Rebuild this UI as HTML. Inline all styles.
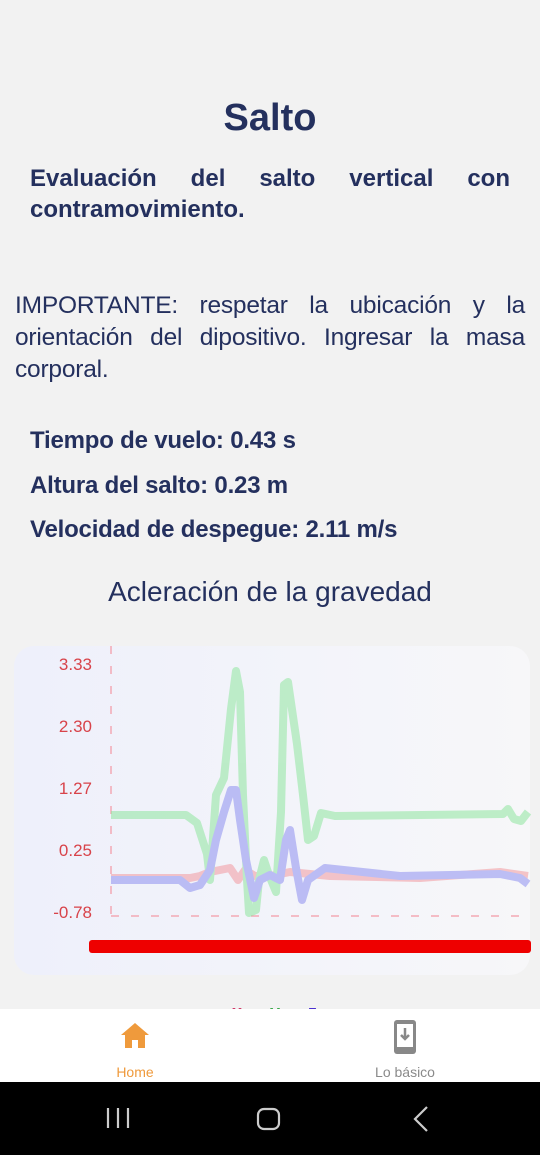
<!DOCTYPE html>
<html><head><meta charset="utf-8"><style>
body{margin:0;width:540px;height:1155px;background:#f2f2f2;position:relative;overflow:hidden;font-family:"Liberation Sans",Roboto,sans-serif;color:#24305e}
.a{position:absolute}
h1{position:absolute;top:97px;left:0;width:540px;text-align:center;margin:0;font-size:38px;font-weight:bold;color:#24305e}
.sub{left:30px;width:480px;top:163px;font-size:24px;font-weight:bold;line-height:31px;text-align:justify;text-align-last:left}
.imp{left:15px;width:510px;top:290px;font-size:24.5px;line-height:32px;text-align:justify;color:#24305e;letter-spacing:-0.2px}
.st{left:30px;font-size:24px;font-weight:bold;letter-spacing:-0.2px}
</style></head><body>
<h1>Salto</h1>
<div class="a sub">Evaluación del salto vertical con contramovimiento.</div>
<div class="a imp">IMPORTANTE: respetar la ubicación y la orientación del dipositivo. Ingresar la masa corporal.</div>
<div class="a st" style="top:427px">Tiempo de vuelo: 0.43 s</div>
<div class="a st" style="top:472px">Altura del salto: 0.23 m</div>
<div class="a st" style="top:516px">Velocidad de despegue: 2.11 m/s</div>
<div class="a" style="top:576px;left:0;width:540px;text-align:center;font-size:28px">Acleración de la gravedad</div>
<div class="a" style="left:14px;top:646px;width:516px;height:329px;border-radius:20px;background:linear-gradient(90deg,#eef0fb,#f7f7f9)"></div>
<svg class="a" style="left:0;top:0" width="540" height="1010">
<g font-size="17" fill="#d8434a" text-anchor="end" font-family="Liberation Sans,sans-serif">
<text x="92" y="670">3.33</text><text x="92" y="732">2.30</text><text x="92" y="794">1.27</text><text x="92" y="856">0.25</text><text x="92" y="918">-0.78</text></g>
<line x1="111" y1="646" x2="111" y2="915" stroke="#f3a9b4" stroke-width="1.5" stroke-dasharray="8,12"/>
<line x1="111" y1="916" x2="528" y2="916" stroke="#f3a9b4" stroke-width="1.5" stroke-dasharray="8,12"/>
<g fill="none" stroke-width="8" stroke-linejoin="round" opacity="0.55">
<polyline stroke="#f29aa0" points="111,878 190,878 200,876 210,872 220,870 230,868 238,880 245,870 255,876 270,876 290,872 330,876 420,878 500,872 528,876"/>
<polyline stroke="#8fe69f" points="111,815 186,815 197,823 207,854 210,880 216,795 224,778 231,709 236,671 240,692 243,795 247,880 249,913 256,910 259,880 264,860 269,875 276,892 281,812 284,685 288,682 297,744 303,795 308,840 314,836 321,813 335,816 503,814 508,809 514,819 521,821 528,812"/>
<polyline stroke="#8e90f0" points="111,880 180,880 190,888 200,885 210,870 216,840 224,812 231,790 236,790 240,820 246,860 254,898 260,880 270,875 280,880 286,840 290,830 296,868 302,900 308,880 325,868 400,876 500,874 520,878 528,884"/>
</g>
<rect x="89" y="940" width="442" height="13" rx="3" fill="#ee0000"/>
<g font-size="18" font-weight="bold" font-family="Liberation Sans,sans-serif"><text x="232" y="1018" fill="#d03a6a">x</text><text x="270" y="1018" fill="#3aa84a">y</text><text x="308" y="1018" fill="#4a30d0">z</text></g>
</svg>
<div class="a" style="top:1009px;left:0;width:540px;height:73px;background:#fff"></div>
<svg class="a" style="left:120px;top:1020px" width="30" height="30" viewBox="0 0 30 30"><path d="M15 3 L1 15 H5 V28 H12 V20 H18 V28 H25 V15 H29 Z" fill="#ef9a3c"/></svg>
<div class="a" style="top:1064px;left:85px;width:100px;text-align:center;font-size:14px;color:#ef9a3c">Home</div>
<svg class="a" style="left:393px;top:1019px" width="24" height="36" viewBox="0 0 24 36"><rect x="1" y="1" width="22" height="34" rx="3" fill="#888"/><rect x="4" y="5" width="16" height="23" fill="#fff"/><path d="M12 9 V20 M8 16 L12 20 L16 16" stroke="#888" stroke-width="2.5" fill="none"/></svg>
<div class="a" style="top:1064px;left:355px;width:100px;text-align:center;font-size:14px;color:#8a8a8a">Lo básico</div>
<div class="a" style="top:1082px;left:0;width:540px;height:73px;background:#000"></div>
<svg class="a" style="left:0;top:1082px" width="540" height="73"><g stroke="#ccc" stroke-width="2.2" fill="none"><path d="M108 26V46M118 26V46M128 26V46"/><rect x="258" y="27" width="21" height="20" rx="6"/><path d="M427 25L415 37L427 49"/></g></svg>
</body></html>
